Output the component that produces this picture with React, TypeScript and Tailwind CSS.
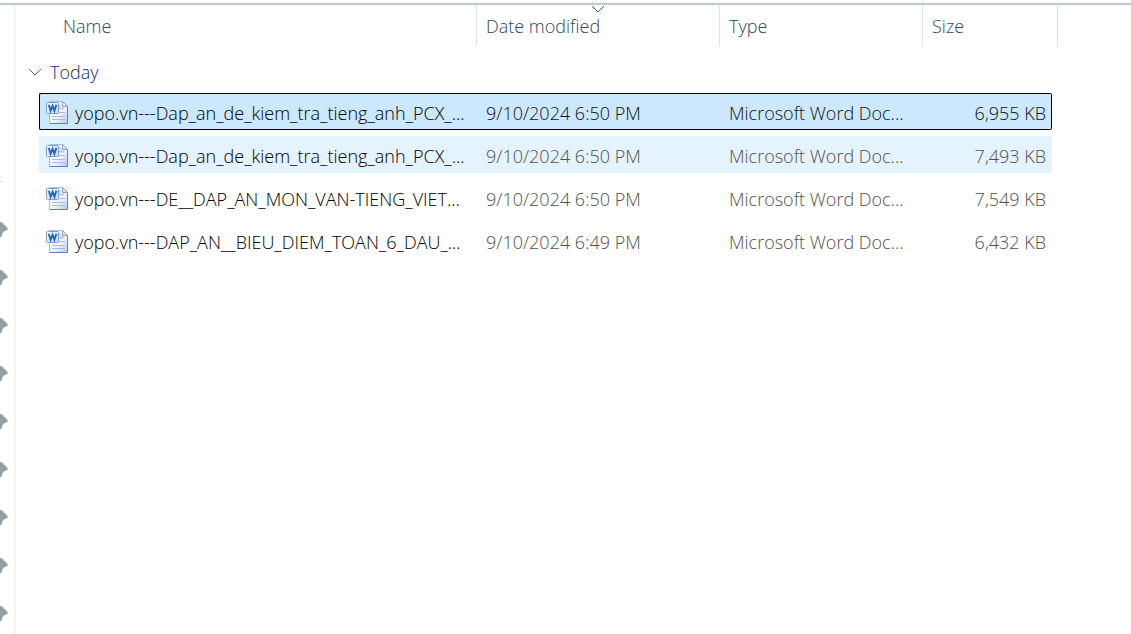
import clsx from 'clsx'

const files = [
  { name: 'yopo.vn---Dap_an_de_kiem_tra_tieng_anh_PCX_...', date: '9/10/2024 6:50 PM', size: '6,955 KB', state: 'selected' },
  { name: 'yopo.vn---Dap_an_de_kiem_tra_tieng_anh_PCX_...', date: '9/10/2024 6:50 PM', size: '7,493 KB', state: 'hover' },
  { name: 'yopo.vn---DE__DAP_AN_MON_VAN-TIENG_VIET...', date: '9/10/2024 6:50 PM', size: '7,549 KB', state: '' },
  { name: 'yopo.vn---DAP_AN__BIEU_DIEM_TOAN_6_DAU_...', date: '9/10/2024 6:49 PM', size: '6,432 KB', state: '' },
]

const pins = [1, 2, 3, 4, 5, 6, 7, 8, 9]

function PinIcon() {
  return (
    <svg className="block w-2 h-4 shrink-0" viewBox="0 0 8 16" aria-hidden="true">
      <path d="M0 .3H2.2L3.2 1.8 7.6 6V7.6L5.8 8.8 3.6 9.6 2.4 11 1.8 14.2.8 15 0 15Z" fill="#929da4" />
    </svg>
  )
}

function Chevron({ className }: { className: string }) {
  return (
    <svg className={className} viewBox="0 0 14 8" fill="none" aria-hidden="true">
      <path d="M1 1 7 7 13 1" stroke="currentColor" />
    </svg>
  )
}

function WordIcon() {
  return (
    <svg className="w-6 h-6 shrink-0" viewBox="0 0 24 24" aria-hidden="true">
      <defs>
        <linearGradient id="paper" x1="0" y1="0" x2="1" y2="1">
          <stop offset="0" stopColor="#ffffff" />
          <stop offset="0.6" stopColor="#eef3fc" />
          <stop offset="1" stopColor="#b4c7ea" />
        </linearGradient>
        <linearGradient id="tile" x1="0" y1="0" x2="1" y2="1">
          <stop offset="0" stopColor="#ffffff" />
          <stop offset="1" stopColor="#c9dcf6" />
        </linearGradient>
      </defs>
      <path d="M3.5.5H16.5L21.5 5.5V22.5H3.5Z" fill="url(#paper)" stroke="#a9bce0" />
      <path d="M21.5 6V22.5H4" fill="none" stroke="#6480ba" />
      <path d="M16.5.5V5.5H21.5Z" fill="#dde6f5" stroke="#8ba2cd" />
      <path d="M13 4.5H15M13 7.5H18" stroke="#b9c8e4" strokeWidth="2" />
      <path d="M13 11.5H19M6 15.5H19M6 18.5H19" stroke="#a9bbdd" />
      <rect x="0.5" y="1.5" width="12" height="11" rx="0.8" fill="url(#tile)" stroke="#7f9dd2" />
      <path d="M2.8 3.8 4.6 9.8 6.6 4.8 8.4 9.8 10.4 3.8" fill="none" stroke="#2468bd" strokeWidth="2" />
    </svg>
  )
}

export default function App() {
  return (
    <div className="flex min-h-screen flex-col bg-white pt-[3px] font-['Open_Sans','Noto_Sans',sans-serif] text-[18px] leading-6 font-light">
      <div className="h-0.5 bg-[#b9c9d6]" />
      <div className="flex flex-1">
        <aside className="flex w-4 shrink-0 flex-col border-r-2 border-[#f5f5f5] pt-44">
          <div className="h-px w-px bg-[#b5b5b5]" />
          <div className="flex flex-col gap-8 pt-10">
            {pins.map((pin) => (
              <PinIcon key={pin} />
            ))}
          </div>
        </aside>

        <main className="min-w-0 flex-1">
          <table className="-mt-1.5 w-[1042px] table-fixed border-separate border-spacing-x-0 border-spacing-y-1.5">
            <colgroup>
              <col className="w-[23px]" />
              <col className="w-[437px]" />
              <col className="w-[243px]" />
              <col className="w-[203px]" />
              <col className="w-[130px]" />
              <col className="w-[6px]" />
            </colgroup>
            <thead>
              <tr className="h-[41px] text-left text-[#2f4560]">
                <td className="p-0" />
                <th scope="col" className="p-0 pl-6 font-light">Name</th>
                <th scope="col" aria-sort="descending" className="relative border-l border-[#e2e2e2] p-0 pl-[9px] font-light">
                  <Chevron className="absolute inset-x-0 top-0 mx-auto h-2 w-3.5 text-[#5a5a5a]" />
                  Date modified
                </th>
                <th scope="col" className="border-l border-[#e2e2e2] p-0 pl-[9px] font-light">Type</th>
                <th scope="col" colSpan={2} className="border-x border-[#e2e2e2] p-0 pl-[9px] font-light">Size</th>
              </tr>
            </thead>
            <tbody>
              <tr className="h-[35px]">
                <th scope="rowgroup" colSpan={6} className="p-0 pl-3 pt-1 text-left font-light">
                  <button type="button" aria-expanded="true" className="flex items-center gap-2 text-[#0c1f7a]">
                    <Chevron className="h-2 w-3.5 text-[#6b6b6b]" />
                    Today
                  </button>
                </th>
              </tr>
              {files.map((file, index) => {
                const selected = file.state === 'selected'
                const cell = clsx(
                  'border-y p-0 pt-0.5',
                  selected && 'border-black bg-[#cce8ff]',
                  file.state === 'hover' && 'border-[#e5f3ff] bg-[#e5f3ff]',
                  !file.state && 'border-transparent',
                )
                const detail = selected ? 'text-[#101010]' : 'text-[#505050]'
                return (
                  <tr key={index} className="h-[37px] whitespace-nowrap" aria-selected={selected}>
                    <td className="p-0" />
                    <td className={clsx(cell, 'rounded-l-xs border-l pl-1.5 text-black')}>
                      <div className="flex items-center gap-[5px]">
                        <WordIcon />
                        {file.name}
                      </div>
                    </td>
                    <td className={clsx(cell, detail, 'pl-2.5')}>{file.date}</td>
                    <td className={clsx(cell, detail, 'pl-2.5')}>Microsoft Word Doc...</td>
                    <td className={clsx(cell, detail, 'rounded-r-xs border-r pr-[5px] text-right')}>{file.size}</td>
                    <td className="p-0" />
                  </tr>
                )
              })}
            </tbody>
          </table>
        </main>
      </div>
    </div>
  )
}
